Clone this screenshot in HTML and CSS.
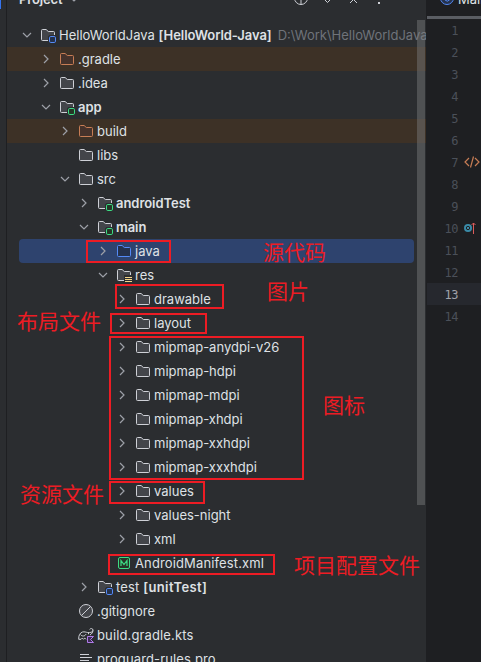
FILE: index.html
```html
<!DOCTYPE html>
<html lang="zh-CN">
<head>
<meta charset="utf-8">
<title>Project</title>
<link rel="stylesheet" href="styles.css">
</head>
<body>
<svg class="defs" width="0" height="0">
  <symbol id="right" viewBox="0 0 16 16"><path d="M6 4l4 4-4 4" fill="none" stroke="#9da0a8" stroke-width="1.2"/></symbol>
  <symbol id="down" viewBox="0 0 16 16"><path d="M4 6l4 4 4-4" fill="none" stroke="#9da0a8" stroke-width="1.2"/></symbol>
  <symbol id="folder" viewBox="0 0 16 16"><path d="M1.5 3.5a1 1 0 0 1 1-1h3.6l2.2 2h5.2a1 1 0 0 1 1 1v7a1 1 0 0 1-1 1h-11a1 1 0 0 1-1-1z" fill="var(--fill)" stroke="var(--line)"/></symbol>
  <symbol id="module" viewBox="0 0 16 16"><path d="M8 13.500H2.500a1 1 0 0 1-1-1v-9a1 1 0 0 1 1-1h3.600l2.200 2h5.200a1 1 0 0 1 1 1V8H9.500L8 9.500z" fill="#43454a"/><path d="M8 13.500H2.500a1 1 0 0 1-1-1v-9a1 1 0 0 1 1-1h3.600l2.200 2h5.200a1 1 0 0 1 1 1V8" fill="none" stroke="#ced0d6"/><rect x="9.500" y="9.500" width="6" height="6" rx="1.300" fill="var(--badge-fill)" stroke="var(--badge)"/></symbol>
  <symbol id="res" viewBox="0 0 16 16"><path d="M8 13.500H2.500a1 1 0 0 1-1-1v-9a1 1 0 0 1 1-1h3.600l2.200 2h5.200a1 1 0 0 1 1 1V8H8z" fill="#43454a"/><path d="M8 13.500H2.500a1 1 0 0 1-1-1v-9a1 1 0 0 1 1-1h3.600l2.200 2h5.200a1 1 0 0 1 1 1V8" fill="none" stroke="#ced0d6"/><path d="M9 10.500h7M9 12.500h7M9 14.500h7" stroke="#f2d48a"/></symbol>
  <symbol id="manifest" viewBox="0 0 16 16"><rect x="2.500" y="2.500" width="11" height="11" rx="1.500" fill="#253627" stroke="#3ddc84"/><path d="M5 11V5.500l3 4 3-4V11" fill="none" stroke="#3ddc84" stroke-width="1.200"/></symbol>
  <symbol id="ignore" viewBox="0 0 16 16"><circle cx="8" cy="8" r="6.500" fill="#43454a" stroke="#ced0d6"/><path d="M3.500 12.500l9-9" stroke="#ced0d6"/></symbol>
  <symbol id="gradle" viewBox="0 0 16 16"><path d="M8 12.300c-.5-1.300-2-1.300-2.500 0-.6-1.200-2-1.200-2.500 0H.7C.5 8.500 2 5.700 4.500 5c2-.5 3.500.3 5 .5 2.500.4 5.500-.3 5.500-2.400 0-1.900-2.600-2-3.400-.6M2.500 7.500c1.200 2.200 4.700 2 5.500-.5M15 3.500c-.2 2-1.500 3.500-3 4.500M10.500 6v1.200" fill="none" stroke="#ced0d6"/><path d="M9.500 9.500h6l-3 3 3 3h-6z" fill="#3c2d53" stroke="#b07be8"/></symbol>
  <symbol id="document" viewBox="0 0 16 16"><path d="M2 3.500h9M2 6.500h12M2 9.500h9M2 12.500h12" stroke="#ced0d6"/></symbol>
</svg>
<div class="window">
  <div class="stripe"><span class="active"></span></div>
  <aside class="project">
    <header class="toolbar">
      <b class="title">Project</b>
      <svg class="caret" viewBox="0 0 16 16"><use href="#down"/></svg>
      <svg class="tools" viewBox="0 0 96 16"><g fill="none" stroke="#ced0d6"><circle cx="8" cy="8" r="6.500"/><path d="M8 1.500V6M8 10v4.500M1.500 8H6M10 8h4.500M31 9l3.500 3.500L38 9M57 13l3.500-3.500L64 13"/></g><path d="M85 12h2v2h-2z" fill="#ced0d6"/></svg>
    </header>
    <div class="tree" id="tree"></div>
    <span class="scrollbar"></span>
  </aside>
  <main class="editor">
    <div class="tab"><svg viewBox="0 0 16 16"><circle cx="8" cy="8" r="6.500" fill="#25324d" stroke="#548af7"/><path d="M10.500 6a3 3 0 1 0 0 4" fill="none" stroke="#548af7"/></svg><span>Main</span></div>
    <div id="code-lines"></div>
  </main>
  <div class="notes">
    <i class="box java"></i><i class="box drawable"></i><i class="box layout"></i><i class="box mipmap"></i><i class="box values"></i><i class="box manifest"></i>
    <span class="note n-java">源代码</span><span class="note n-image">图片</span><span class="note n-layout">布局文件</span><span class="note n-icon">图标</span><span class="note n-values">资源文件</span><span class="note n-manifest">项目配置文件</span>
  </div>
</div>
<script src="tree.js"></script>
</body>
</html>
```
FILE: styles.css
```css
body { margin: 0; background: #2b2d30; font: 13px/24px Inter, sans-serif; color: #dfe1e5; }
.defs { position: absolute; }
.window { position: relative; display: flex; width: 481px; height: 662px; overflow: hidden; }
.stripe { box-sizing: border-box; width: 7px; border-right: 1px solid #1e1f22; background: #2b2d30; }
.active { display: block; width: 1px; height: 9px; background: #3574f0; }
.project { position: relative; width: 419px; background: #2b2d30; overflow: hidden; }
.toolbar { display: flex; height: 23px; line-height: 16px; }
.toolbar > * { flex: none; margin-top: -9px; }
.title { width: 44px; margin-left: 12px; font-weight: 600; letter-spacing: -.15px; }
.caret { width: 16px; height: 16px; margin-left: 3px; }
.tools { width: 96px; height: 16px; margin-left: 211px; }
.project .tools { margin-top: -10px; }
.row { display: flex; align-items: center; height: 24px; padding-left: calc(12px + var(--level) * 19px); white-space: nowrap; }
.row svg { flex: none; width: 16px; height: 16px; }
.arrow { margin-right: 5px; }
.icon { margin-right: 3px; }
.row b { font-weight: 600; letter-spacing: -.05px; }
.path { margin-left: 6px; color: #6f737a; }
.wide { letter-spacing: .13px; }
.row .wider { letter-spacing: .4px; }
.excluded { background: #3d3126; }
.selected { margin: 0 12px; padding-left: calc(var(--level) * 19px); border-radius: 4px; background: #2e436e; }
.folder { --fill: #43454a; --line: #ced0d6; }
.orange { --fill: #45322b; --line: #c77d55; }
.blue { --fill: #25324d; --line: #548af7; }
.green-badge { --badge: #3ddc84; --badge-fill: #253627; }
.blue-badge { --badge: #548af7; --badge-fill: #25324d; }
.scrollbar { position: absolute; top: 20px; right: 1px; width: 8px; height: 485px; background: rgba(128, 130, 134, .42); }
.editor { flex: 1; border-left: 1px solid #1e1f22; background: #1e1f22; overflow: hidden; }
.tab { display: flex; height: 16px; border-bottom: 3px solid #5a5d63; line-height: 16px; }
.tab svg { flex: none; width: 16px; height: 16px; margin: -10px 3px 0 12px; }
.tab span { margin-top: -9px; }
.line { display: flex; align-items: center; height: 22px; font: 12px/22px "DejaVu Sans Mono", monospace; letter-spacing: -.5px; color: #4b5059; }
.number { width: 31px; padding-top: 2px; text-align: right; }
.line svg { width: 16px; height: 16px; margin-left: 6px; }
.current { background: #26282e; color: #a1a3ab; }
.box { position: absolute; box-sizing: border-box; border: 2px solid #ed1c24; }
.java { left: 86px; top: 240px; width: 85px; height: 23px; }
.drawable { left: 115px; top: 284px; width: 109px; height: 25px; }
.layout { left: 110px; top: 313px; width: 97px; height: 21px; }
.mipmap { left: 109px; top: 336px; width: 195px; height: 144px; }
.values { left: 109px; top: 481px; width: 96px; height: 23px; }
.box.manifest { left: 108px; top: 554px; width: 167px; height: 21px; }
.note { position: absolute; font: 400 21px/24px "Noto Sans CJK SC", sans-serif; color: #ed1c24; white-space: nowrap; }
.n-java { left: 263px; top: 239px; }
.n-image { left: 267px; top: 278px; }
.n-layout { left: 17px; top: 308px; }
.n-icon { left: 323px; top: 392px; }
.n-values { left: 20px; top: 481px; }
.n-manifest { left: 294px; top: 552px; }
```
FILE: tree.js
```js
// [level, arrow, icon, icon colour, label, row state]
const rows = [
  [0, "down", "module", "blue-badge", 'HelloWorldJava&nbsp;<b>[HelloWorld-Java]</b><span class="path">D:\\Work\\HelloWorldJava</span>', ""],
  [1, "right", "folder", "orange", ".gradle", "excluded"],
  [1, "right", "folder", "", ".idea", ""],
  [1, "down", "module", "green-badge", "<b>app</b>", ""],
  [2, "right", "folder", "orange", "build", "excluded"],
  [2, "", "folder", "", "libs", ""],
  [2, "down", "folder", "", "src", ""],
  [3, "right", "module", "green-badge", "<b>androidTest</b>", ""],
  [3, "down", "module", "green-badge", "<b>main</b>", ""],
  [4, "right", "folder", "blue", "java", "selected"],
  [4, "down", "res", "", "res", ""],
  [5, "right", "folder", "", "drawable", ""],
  [5, "right", "folder", "", "layout", ""],
  [5, "right", "folder", "", "mipmap-anydpi-v26", ""],
  [5, "right", "folder", "", "mipmap-hdpi", ""],
  [5, "right", "folder", "", "mipmap-mdpi", ""],
  [5, "right", "folder", "", "mipmap-xhdpi", ""],
  [5, "right", "folder", "", "mipmap-xxhdpi", ""],
  [5, "right", "folder", "", "mipmap-xxxhdpi", ""],
  [5, "right", "folder", "", "values", ""],
  [5, "right", "folder", "", "values-night", ""],
  [5, "right", "folder", "", "xml", ""],
  [4, "", "manifest", "", '<span class="wide">AndroidManifest.xml</span>', ""],
  [3, "right", "module", "blue-badge", '<span class="wide">test&nbsp;</span><b class="wider">[unitTest]</b>', ""],
  [2, "", "ignore", "", ".gitignore", ""],
  [2, "", "gradle", "", '<span class="wide">build.gradle.kts</span>', ""],
  [2, "", "document", "", '<span class="wide">proguard-rules.pro</span>', ""]
];
document.getElementById("tree").innerHTML = rows.map(([level, arrow, icon, color, label, state]) =>
  `<div class="row ${state}" style="--level:${level}"><svg class="arrow">${arrow ? `<use href="#${arrow}"/>` : ""}</svg><svg class="icon folder ${color}"><use href="#${icon}"/></svg><span>${label}</span></div>`).join("");

const marks = {
  7: '<svg viewBox="0 0 16 16"><path d="M5 4L1 8l4 4M11 4l4 4-4 4M9.500 2.500l-3 11" fill="none" stroke="#c77d55" stroke-width="1.200"/></svg>',
  10: '<svg viewBox="0 0 16 16"><circle cx="4" cy="8" r="4" fill="#3a8ba8"/><circle cx="4" cy="8" r="1.700" fill="#3a8ba8" stroke="#1e1f22"/><path d="M9.500 14V3M7.500 5l2-2 2 2" fill="none" stroke="#db5c5c"/></svg>'
};
document.getElementById("code-lines").innerHTML = Array.from({ length: 14 }, (_, i) => i + 1).map(n =>
  `<div class="line${n === 13 ? " current" : ""}"><span class="number">${n}</span>${marks[n] || ""}</div>`).join("");
```
